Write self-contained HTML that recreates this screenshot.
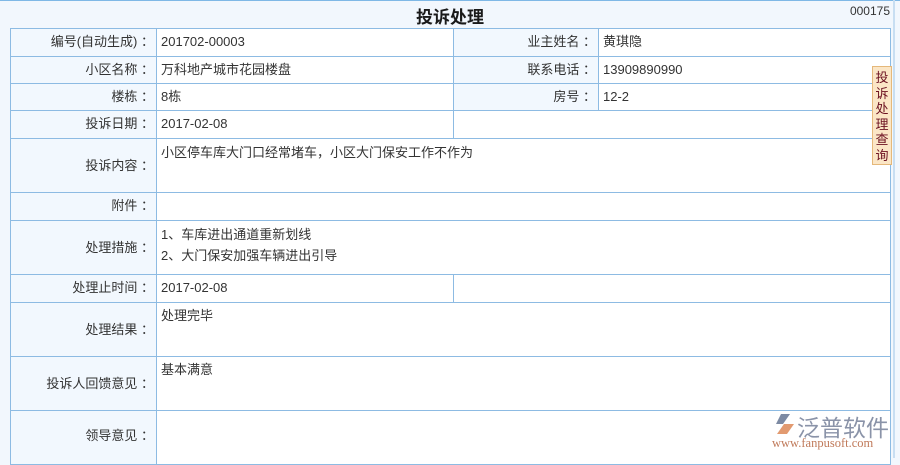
<!DOCTYPE html>
<html><head><meta charset="utf-8"><style>
body{margin:0;width:900px;height:458px;overflow:hidden;background:#f2f7fd;font-family:"Liberation Sans","Noto Sans CJK SC",sans-serif;font-size:13px;color:#333;position:relative}
.top{position:absolute;left:0;top:0;width:900px;height:1px;background:#7fb8e6}
.rl{position:absolute;left:893px;top:0;width:2px;height:458px;background:#c8def2}
h1{position:absolute;left:0;width:900px;top:3px;margin:0;text-align:center;font-size:17px;font-weight:bold;color:#1a1a1a}
.no{position:absolute;right:10px;top:4px;font-size:12px;color:#333}
.c{position:absolute;box-sizing:border-box;border:1px solid #8dbbe3;line-height:26px;white-space:nowrap;overflow:hidden}
.l{background:#f2f8fe;text-align:right;padding-right:2px}
.v{background:#fff;padding-left:4px}
.tab{position:absolute;left:872px;top:66px;width:20px;height:99px;background:#fbe6c6;border:1px solid #e5b87a;box-sizing:border-box;color:#6b1020;font-size:13px;line-height:15.5px;text-align:center;padding-top:3px}
.logo{position:absolute;left:772px;top:410px;color:#8a93a8}
</style></head><body>
<div class="top"></div><div class="rl"></div>
<h1>投诉处理</h1><div class="no">000175</div>
<div class="c l" style="left:10px;top:28px;width:147px;height:29px">编号(自动生成) ：</div>
<div class="c v" style="left:156px;top:28px;width:298px;height:29px">201702-00003</div>
<div class="c l" style="left:453px;top:28px;width:146px;height:29px">业主姓名 ：</div>
<div class="c v" style="left:598px;top:28px;width:293px;height:29px">黄琪隐</div>

<div class="c l" style="left:10px;top:56px;width:147px;height:28px">小区名称 ：</div>
<div class="c v" style="left:156px;top:56px;width:298px;height:28px">万科地产城市花园楼盘</div>
<div class="c l" style="left:453px;top:56px;width:146px;height:28px">联系电话 ：</div>
<div class="c v" style="left:598px;top:56px;width:293px;height:28px">13909890990</div>

<div class="c l" style="left:10px;top:83px;width:147px;height:28px">楼栋 ：</div>
<div class="c v" style="left:156px;top:83px;width:298px;height:28px">8栋</div>
<div class="c l" style="left:453px;top:83px;width:146px;height:28px">房号 ：</div>
<div class="c v" style="left:598px;top:83px;width:293px;height:28px">12-2</div>

<div class="c l" style="left:10px;top:110px;width:147px;height:29px">投诉日期 ：</div>
<div class="c v" style="left:156px;top:110px;width:298px;height:29px">2017-02-08</div>
<div class="c v" style="left:453px;top:110px;width:438px;height:29px"></div>

<div class="c l" style="left:10px;top:138px;width:147px;height:55px;line-height:53px">投诉内容 ：</div>
<div class="c v" style="left:156px;top:138px;width:735px;height:55px;line-height:28px">小区停车库大门口经常堵车，小区大门保安工作不作为</div>

<div class="c l" style="left:10px;top:192px;width:147px;height:29px">附件 ：</div>
<div class="c v" style="left:156px;top:192px;width:735px;height:29px"></div>

<div class="c l" style="left:10px;top:220px;width:147px;height:55px;line-height:53px">处理措施 ：</div>
<div class="c v" style="left:156px;top:220px;width:735px;height:55px;line-height:21px;padding-top:3px">1、车库进出通道重新划线<br>2、大门保安加强车辆进出引导</div>

<div class="c l" style="left:10px;top:274px;width:147px;height:29px">处理止时间 ：</div>
<div class="c v" style="left:156px;top:274px;width:298px;height:29px">2017-02-08</div>
<div class="c v" style="left:453px;top:274px;width:438px;height:29px"></div>

<div class="c l" style="left:10px;top:302px;width:147px;height:55px;line-height:53px">处理结果 ：</div>
<div class="c v" style="left:156px;top:302px;width:735px;height:55px;line-height:26px">处理完毕</div>

<div class="c l" style="left:10px;top:356px;width:147px;height:55px;line-height:53px">投诉人回馈意见 ：</div>
<div class="c v" style="left:156px;top:356px;width:735px;height:55px;line-height:26px">基本满意</div>

<div class="c l" style="left:10px;top:410px;width:147px;height:55px;line-height:50px">领导意见 ：</div>
<div class="c v" style="left:156px;top:410px;width:735px;height:55px"></div>

<div class="tab">投<br>诉<br>处<br>理<br>查<br>询</div>
<div class="logo">
<svg width="24" height="22" style="position:absolute;left:0;top:3px" viewBox="0 0 24 22"><path d="M9 1 L18 1 L11 11 L4 11 Z" fill="#7d8aa3"/><path d="M12 11 L22 11 L15 21 L5 21 Z" fill="#e29a70"/></svg>
<div style="position:absolute;left:25px;top:-1px;font-size:23px;letter-spacing:0px;white-space:nowrap">泛普软件</div>
<div style="position:absolute;left:0;top:26px;font-size:12.5px;color:#c07a5a;font-family:'Liberation Serif',serif;white-space:nowrap">www.fanpusoft.com</div>
</div>
</body></html>
